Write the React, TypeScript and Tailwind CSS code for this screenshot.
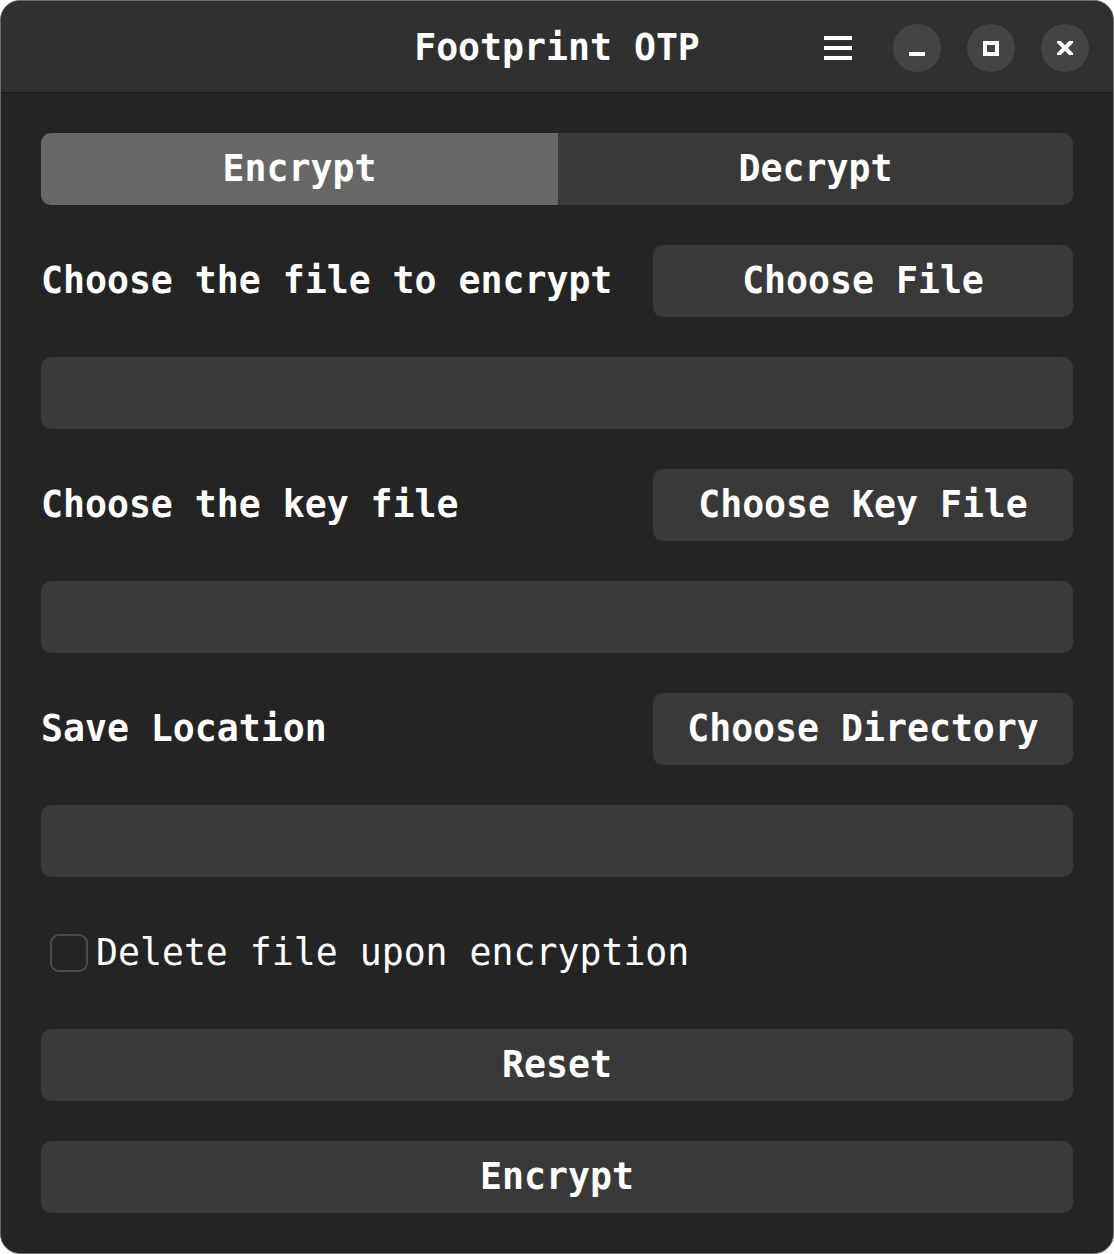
import React from "react";

const font = { fontFamily: '"DejaVu Sans Mono", "Liberation Mono", monospace' };

function TitleBar() {
  return (
    <div className="relative flex h-[92px] items-center justify-center border-b border-[#1b1b1b] bg-[#303030]">
      <span className="pt-[3px] text-[36.5px] font-bold text-white">Footprint OTP</span>
      <div className="absolute right-[24px] top-[23px] flex items-center">
        <div className="mr-[41px] flex w-[28px] flex-col gap-[6px]">
          <div className="h-[4px] w-full bg-white" />
          <div className="h-[4px] w-full bg-white" />
          <div className="h-[4px] w-full bg-white" />
        </div>
        <div className="flex gap-[26px]">
          <div className="flex h-[48px] w-[48px] items-end justify-center rounded-full bg-[#444444] pb-[16px]">
            <div className="h-[4px] w-[16px] bg-white" />
          </div>
          <div className="flex h-[48px] w-[48px] items-center justify-center rounded-full bg-[#444444]">
            <div className="h-[15px] w-[16px] border-[4px] border-white" />
          </div>
          <div className="flex h-[48px] w-[48px] items-center justify-center rounded-full bg-[#444444]">
            <svg width="16" height="14" viewBox="0 0 16 14">
              <path d="M2 1 L14 13 M14 1 L2 13" stroke="white" strokeWidth="4" strokeLinecap="square" />
            </svg>
          </div>
        </div>
      </div>
    </div>
  );
}

function Btn({ label, className = "" }: { label: string; className?: string }) {
  return (
    <button className={`flex h-[72px] items-center justify-center rounded-[10px] bg-[#393939] text-[36.5px] font-bold text-white ${className}`}>
      {label}
    </button>
  );
}

function PickRow({ label, button }: { label: string; button: string }) {
  return (
    <>
      <div className="flex h-[72px] items-center justify-between">
        <span className="text-[36.5px] font-bold text-white">{label}</span>
        <Btn label={button} className="w-[420px]" />
      </div>
      <div className="h-[72px] rounded-[10px] bg-[#393939]" />
    </>
  );
}

export default function App() {
  return (
    <div className="h-[1254px] w-[1114px] bg-white" style={font}>
      <div className="flex h-full flex-col overflow-hidden rounded-[20px] border border-[#6a6a6a] bg-[#242424]">
        <TitleBar />
        <div className="flex flex-col gap-10 px-10 pt-10">
          <div className="flex h-[72px] overflow-hidden rounded-[10px] bg-[#393939]">
            <div className="flex w-[517px] items-center justify-center bg-[#676767] text-[36.5px] font-bold text-white">Encrypt</div>
            <div className="flex flex-1 items-center justify-center text-[36.5px] font-bold text-white">Decrypt</div>
          </div>
          <PickRow label="Choose the file to encrypt" button="Choose File" />
          <PickRow label="Choose the key file" button="Choose Key File" />
          <PickRow label="Save Location" button="Choose Directory" />
          <div className="flex h-[72px] items-center pl-[9px]">
            <div className="h-[38px] w-[38px] rounded-[9px] border-2 border-[#4a4a4a]" />
            <span className="ml-[8px] text-[36.5px] text-white">Delete file upon encryption</span>
          </div>
          <Btn label="Reset" />
          <Btn label="Encrypt" />
        </div>
      </div>
    </div>
  );
}
